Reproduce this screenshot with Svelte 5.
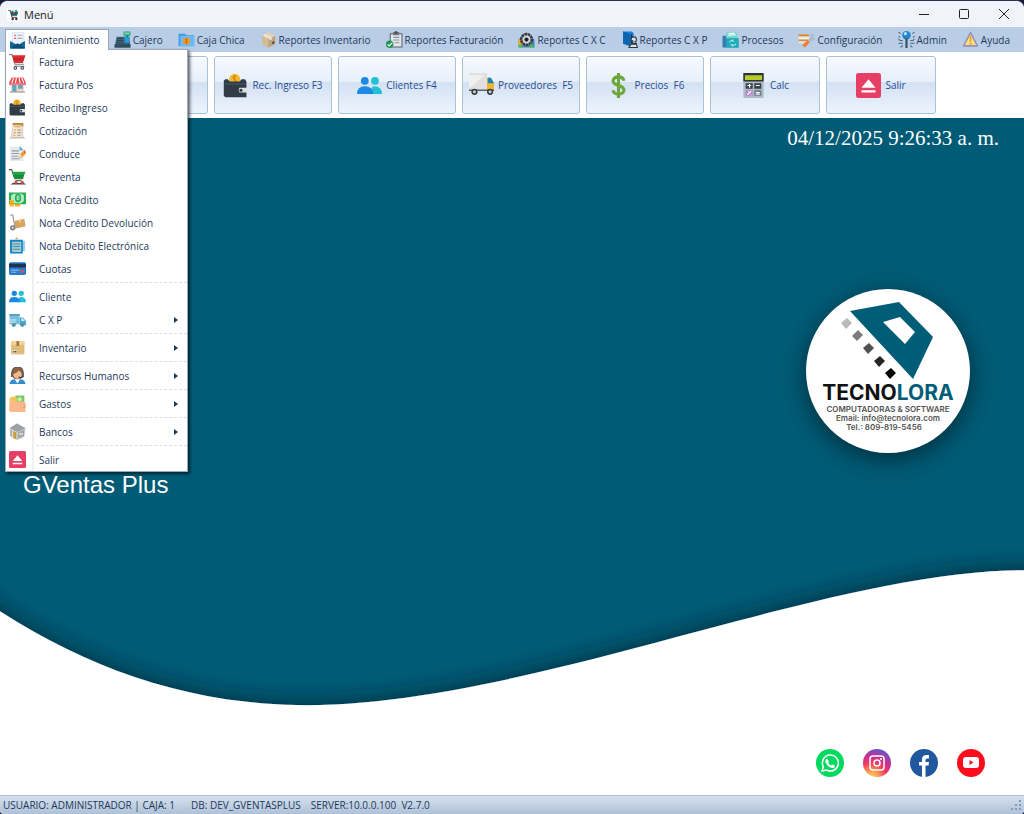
<script lang="ts">
  type MenuEntry = { label: string; icon: string; submenu?: boolean; divider?: boolean };

  const icons: Record<string, string> = {
    app: `<rect width="32" height="32" rx="4" fill="#fff"/><path d="M3 6h5l4 17h13" fill="none" stroke="#333" stroke-width="2"/><path d="M8 9h20l-4 10H11z" fill="#1e5660"/><path d="M11 6h5v5h-5zm9-1h5v6h-5z" fill="#28a08c"/><path d="M15 10h4v5h-4z" fill="#d84a42"/><circle cx="14" cy="27" r="3" fill="#333"/><circle cx="23" cy="27" r="3" fill="#333"/>`,
    mail: `<path d="M6 1h22v22H6z" fill="#eef1f6" stroke="#ccd3dd"/><path d="M10 6h3m3 0h9M10 12h3m3 0h9" stroke="#a4aec0" stroke-width="2"/><path d="M10 6h3m-3 6h3" stroke="#e25766" stroke-width="2"/><path d="M2 17l14 8 14-8v14H2z" fill="#06679b"/><path d="M2 31l14-10 14 10z" fill="#0a4d79"/>`,
    register: `<path d="M18 1h13v8H18z" fill="#26a77b"/><path d="M20 3h9v3h-9z" fill="#7bdcb6"/><path d="M23 9h4v4h-4z" fill="#2f4a5a"/><path d="M5 11h24l2 20H1z" fill="#426579"/><path d="M20 11h9v11h-9z" fill="#239cdc"/><path d="M6 14h12M5 18h13M4 22h14" stroke="#253e50" stroke-width="2" stroke-dasharray="3 1"/><path d="M1 25h30v6H1z" fill="#304b5c"/>`,
    cash: `<path d="M1 5h12l3 3h14v20H1z" fill="#4498e3"/><path d="M4 9h27v20H4z" fill="#69b9fa"/><circle cx="16" cy="19" r="7" fill="#f29b20"/><path d="M18 15h-3q-2 1 0 3l2 1q2 2-1 3h-3m3-9v12" stroke="#9b5c12" fill="none"/>`,
    cube: `<path d="M3 9L15 2l14 7-1 16-12 6L4 25z" fill="#c9b89a"/><path d="M3 9l13 6v16L4 25z" fill="#d0bd98"/><path d="M29 9l-13 6v16l12-6z" fill="#b9a47d"/><path d="M3 9L15 2l14 7-13 6z" fill="#ded2be"/><path d="M9 6l13 6v4l-4 2v-5L6 8z" fill="#f1e9d9"/><path d="M23 21l4-2v4l-4 2z" fill="#4c4032"/>`,
    check: `<path d="M8 5h22v25H8z" fill="#e1e7ec" stroke="#5d6470" stroke-width="2"/><path d="M13 2h12v6H13z" fill="#727984"/><circle cx="19" cy="3" r="3" fill="#4c535f"/><path d="M14 12h11m-11 5h11m-9 5h9" stroke="#8c929a" stroke-width="2"/><circle cx="7" cy="25" r="7" fill="#239657"/><path d="M3 25l3 3 6-6" fill="none" stroke="white" stroke-width="2"/>`,
    support: `<path d="M1 16L16 3l15 13v15H1z" fill="#4288ba"/><path d="M1 17l14-14 10 7-12 17H1z" fill="#f7b20e"/><circle cx="16" cy="16" r="10" fill="#d7dbe1" stroke="#353d49" stroke-width="5" stroke-dasharray="5 1"/><circle cx="16" cy="16" r="4" fill="#20242b"/><path d="M5 23l4 8H2zm18 0l8 8h-9z" fill="#56bd45"/>`,
    book: `<path d="M4 1h16l4 3v20H4z" fill="#1680d8"/><path d="M4 1l14 5v23L4 24z" fill="#0a65b3"/><path d="M20 6v20" stroke="#1c2937" stroke-width="2"/><circle cx="24" cy="16" r="5" fill="#dbe1e6" stroke="#303943" stroke-width="2"/><path d="M22 17v6h7v3M15 31l4-6h10l2 6z" fill="#dbe1e6" stroke="#2d3842" stroke-width="2"/>`,
    process: `<path d="M8 3l18-2 3 8v14H8z" fill="#78d6d0"/><path d="M12 5l12-1m-12 4l14-1" stroke="#fff" stroke-width="2"/><path d="M1 9h7v5h23v17H1z" fill="#347db1"/><path d="M8 14h23v17H8z" fill="#1eadb8"/><path d="M14 21q2-4 7-2l-2-3m7 8q-2 4-8 2l2 3" fill="none" stroke="#b6f0eb" stroke-width="2"/>`,
    config: `<path d="M1 6h20v18H1z" fill="#dcdde0"/><path d="M1 6h20v4H1zm0 10h19v3H1z" fill="#d88d35"/><path d="M1 12h20v3H1z" fill="#f7f2e2"/><path d="M12 24l12-12q-1-7 7-6l-4 4 1 4 4-2q0 6-7 6L15 29z" fill="#adb8cf"/><path d="M18 17l4 4-9 10-5-4z" fill="#f17d2e"/>`,
    admin: `<circle cx="16" cy="8" r="8" fill="#2385d4"/><circle cx="14" cy="5" r="3" fill="#b6e1fb"/><path d="M14 15h4v17h-4z" fill="#344d61"/><path d="M12 14h8M9 18H4l-3-3m8 8H1m8 4l-4 4M23 18h5l3-3m-8 8h8m-8 4l4 4M5 5L1 2m3 9H1m26-6l4-3m-3 9h3" fill="none" stroke="#49667e" stroke-width="2"/>`,
    warning: `<path d="M16 3l13 25H3z" fill="#ffd166" stroke="#9492be" stroke-width="3" stroke-linejoin="round"/><path d="M16 8l10 18H6z" fill="#ffe07a"/><path d="M16 10v10" stroke="#e99b25" stroke-width="3"/><circle cx="16" cy="24" r="2" fill="#e99b25"/>`,
    cart: `<path d="M0 3h6l5 18h17M10 25h19" fill="none" stroke="#7b838c" stroke-width="2"/><path d="M6 4h25l-5 15H10z" fill="#db2d32"/><path d="M8 9h21l-2 5H9z" fill="#ca2229"/><circle cx="12" cy="28" r="3.5" fill="#4d5661"/><circle cx="25" cy="28" r="3.5" fill="#4d5661"/><circle cx="12" cy="28" r="1.5" fill="#ddd"/><circle cx="25" cy="28" r="1.5" fill="#ddd"/>`,
    store: `<path d="M4 13h24v16H4z" fill="#ecd7ca"/><path d="M6 16h8v13H6zm11 0h9v8h-9z" fill="#62a7bf"/><path d="M5 3h22l5 10H0z" fill="#ed4b53"/><path d="M9 3L5 14m9-11l-2 11m7-11l2 11m3-11l4 11" stroke="#fff" stroke-width="2"/><path d="M0 13h32v3l-3 2-4-2-4 2-5-2-4 2-5-2-4 2-3-2z" fill="#e7777d"/><path d="M2 29h28v2H2z" fill="#8c847f"/>`,
    wallet: `<circle cx="15" cy="8" r="7" fill="#f5b52c"/><path d="M17 4h-3q-3 2 0 4l2 1q3 2 0 3h-3m2-9v10" stroke="#bd7811" fill="none"/><path d="M1 10l2-2h3l3 3h12l3-3h4l2 3v20H3l-2-2z" fill="#303c45"/><path d="M2 14h27" stroke="#42515b" stroke-width="2"/><path d="M21 19h10v6H21q-2-3 0-6z" fill="#dce1e2"/><circle cx="23" cy="22" r="2" fill="#303c45"/>`,
    quote: `<path d="M7 2l20 3v25H3z" fill="#e2d8cc"/><path d="M8 5h15v23H6z" fill="#f0e6d7"/><path d="M7 2h20v6h-3V6H7z" fill="#c38a3c"/><path d="M10 9h12M9 15h4m3 0h6M9 20h4m3 0h6M8 25h4m4 0h5" stroke="#d4a15f" stroke-width="2"/><path d="M16 15h6m-6 5h6m-6 5h6" stroke="#9f9a94"/><path d="M3 28h25l3 3H0z" fill="#c2c0bd"/>`,
    note: `<path d="M2 3h20l5 5v22H2z" fill="#e7eaed"/><path d="M20 2v8h7z" fill="#4aadd2"/><path d="M5 11h14M5 16h14M5 21h12M5 26h15" stroke="#939da6" stroke-width="2"/><path d="M18 25l3-8 7-6 4 5-8 8z" fill="#f19936"/><path d="M18 25l3-8 4 5z" fill="#efd8b4"/><path d="M27 11l2-2 3 5-2 2z" fill="#e45e4b"/>`,
    greencart: `<path d="M0 3h5l6 17h16" fill="none" stroke="#435a45" stroke-width="2"/><path d="M5 7h26l-5 13H10z" fill="#24a345"/><path d="M9 13h19l-2 6H11z" fill="#168b37"/><path d="M3 31h29l-4-3H7z" fill="#384650"/><path d="M12 23h12v2H12z" fill="#384650"/><circle cx="13" cy="27" r="3" fill="#e44b3b"/><circle cx="25" cy="27" r="3" fill="#e44b3b"/>`,
    credit: `<path d="M0 3h32v22H0z" fill="#27ae58"/><path d="M4 8l5-3h14l5 3v11l-5 4H9l-5-4z" fill="#b4efc2"/><ellipse cx="17" cy="13" rx="6" ry="8" fill="#25ad57"/><ellipse cx="17" cy="13" rx="2" ry="4" fill="none" stroke="#fff" stroke-width="1.5"/><path d="M1 17h8v12H1zm10 7h10v5H11z" fill="#f4b52f"/><path d="M1 20h8m-8 4h8m2 2h10" stroke="#d48715"/>`,
    dolly: `<path d="M2 2h5l4 22M9 27l21-5" fill="none" stroke="#8a8f90" stroke-width="2"/><path d="M10 13l19-4 2 14-19 4z" fill="#d9a562"/><path d="M18 11l4-1 1 5-4 1z" fill="#ebc991"/><circle cx="7" cy="26" r="5" fill="#7b8287"/><circle cx="7" cy="26" r="2" fill="#ddd"/>`,
    document: `<path d="M8 7h22v20H8z" fill="#8bcff0"/><path d="M2 5h24v26H2z" fill="#1685c8"/><path d="M6 9h17v19H6z" fill="#a9ced1"/><path d="M8 13h13M8 18h13M8 23h13" stroke="#478ea2" stroke-width="2"/><path d="M11 4l3-4 4 4z" fill="#d8a55f"/>`,
    card: `<rect y="4" width="32" height="24" rx="3" fill="#237bd0"/><path d="M0 7h32v7H0z" fill="#1e344e"/><path d="M4 19h15M4 23h10" stroke="#84bcec" stroke-width="2"/><circle cx="25" cy="21" r="3" fill="#e65250"/><circle cx="22" cy="21" r="3" fill="#996091"/>`,
    people: `<circle cx="10" cy="10" r="5" fill="#1e88e5"/><circle cx="23" cy="10" r="5" fill="#23bfd5"/><path d="M18 27q-1-10 4-10 10 0 10 10z" fill="#23bfd5"/><path d="M0 27q0-10 10-10t11 10z" fill="#1e88e5"/>`,
    bluetruck: `<path d="M1 6h19v19H1z" fill="#74bfdc"/><path d="M1 6h19v3H1z" fill="#4999b6"/><path d="M20 12h6l6 7v8H20z" fill="#4ba8cf"/><path d="M23 14h3l4 5h-7z" fill="#c2ebf6"/><path d="M0 17h13M2 21h10" stroke="#d5eff7" stroke-width="2"/><circle cx="9" cy="26" r="4" fill="#5397ad"/><circle cx="25" cy="26" r="4" fill="#5397ad"/>`,
    parcel: `<path d="M4 4h25v25H4z" fill="#dfbc79"/><path d="M4 4h25v7H4z" fill="#efd697"/><path d="M14 4h5v9h-5z" fill="#9f7643"/><path d="M7 21h8v6H7z" fill="#f2e9d2"/><path d="M8 24h2m1 0h3" stroke="#453a2d" stroke-width="3"/>`,
    agent: `<circle cx="16" cy="13" r="11" fill="#80522f"/><circle cx="16" cy="14" r="8" fill="#f0ba90"/><path d="M7 13q8-1 12-8 2 6 7 7-1-12-10-12T5 13z" fill="#91613a"/><path d="M5 14q0-14 12-14 10 0 10 14" fill="none" stroke="#4c555c" stroke-width="2"/><path d="M4 13h3v6H4zm21 0h3v6h-3z" fill="#4d585f"/><path d="M27 18q-4 3-9 1" fill="none" stroke="#333" stroke-width="2"/><path d="M1 32q1-9 10-9l5 5 5-5q9 0 10 9z" fill="#318fd2"/><path d="M11 23l5 8 5-8z" fill="#fff"/>`,
    expense: `<path d="M12 1h17v14H12z" fill="#7fc764"/><circle cx="20" cy="8" r="4" fill="#caefa8"/><circle cx="8" cy="10" r="7" fill="#efc757"/><path d="M1 12h27l3 3v17H3l-3-3z" fill="#fab98d"/><path d="M24 18h7v7h-7l-3-3z" fill="#eaa477"/><circle cx="25" cy="21" r="1.5" fill="#fff4dd"/>`,
    bank: `<path d="M1 10l14-9 16 9-2 16-13 6L3 26z" fill="#c4c6c6"/><path d="M1 10l14 7 16-7-16-9z" fill="#9da1a3"/><path d="M1 10l14 7v15L3 26z" fill="#dedfdd"/><path d="M8 15v13l6 3V18z" fill="#c89c3a"/><path d="M4 13v12m15-8v11m4-13v12m4-13v11" stroke="#868c90" stroke-width="2"/><path d="M19 19h8v3h-8z" fill="#dfe1e1"/>`,
    eject: `<rect width="32" height="32" rx="3" fill="#e63e65"/><path d="M16 8L7 19h18zM7 22h18v3H7z" fill="#fff"/>`,
    truck: `<path d="M0 1h23v22H0z" fill="#dfe0df"/><path d="M0 1h22L0 20z" fill="#f0f0ef"/><path d="M0 1h23v1H0z" fill="#c6c8c9"/><path d="M23 6h5l4 7v10h-9z" fill="#f5b334"/><path d="M24 6h4l4 7h-8z" fill="#1584bd"/><path d="M0 21h32v2H0z" fill="#596066"/><circle cx="7" cy="24" r="4" fill="#343c42"/><circle cx="27" cy="24" r="4" fill="#343c42"/><circle cx="7" cy="24" r="2" fill="#c9ced1"/><circle cx="27" cy="24" r="2" fill="#c9ced1"/>`,
    dollar: `<path d="M23 10q-1-5-7-5T9 10c0 8 14 4 14 12q-1 5-7 5t-7-5M16 0v32" fill="none" stroke="#6da63b" stroke-width="4"/>`,
    calculator: `<rect x="3" y="1" width="26" height="31" rx="2" fill="#aebbc2"/><path d="M3 0h26v11H3z" fill="#303339"/><path d="M5 3h22v6H5z" fill="#b7cb2c"/><path d="M6 13h9v7H6zm11 0h9v7h-9z" fill="#354149"/><path d="M6 22h9v7H6z" fill="#b581ce"/><path d="M17 22h9v7h-9z" fill="#6b7c88"/><path d="M8 16h5m-2-2v5m8-3h5M8 28l5-5m-4 1h1m3 4h-1m7-3h5m-5 2h5" stroke="#fff" stroke-width="1.5"/>`
  };

  const menus = [
    { label: 'Mantenimiento', icon: 'mail' },
    { label: 'Cajero', icon: 'register' },
    { label: 'Caja Chica', icon: 'cash' },
    { label: 'Reportes Inventario', icon: 'cube' },
    { label: 'Reportes Facturación', icon: 'check' },
    { label: 'Reportes C X C', icon: 'support' },
    { label: 'Reportes C X P', icon: 'book' },
    { label: 'Procesos', icon: 'process' },
    { label: 'Configuración', icon: 'config' },
    { label: 'Admin', icon: 'admin' },
    { label: 'Ayuda', icon: 'warning' }
  ];

  const entries: MenuEntry[] = [
    { label: 'Factura', icon: 'cart' },
    { label: 'Factura Pos', icon: 'store' },
    { label: 'Recibo Ingreso', icon: 'wallet' },
    { label: 'Cotización', icon: 'quote' },
    { label: 'Conduce', icon: 'note' },
    { label: 'Preventa', icon: 'greencart' },
    { label: 'Nota Crédito', icon: 'credit' },
    { label: 'Nota Crédito Devolución', icon: 'dolly' },
    { label: 'Nota Debito Electrónica', icon: 'document' },
    { label: 'Cuotas', icon: 'card' },
    { label: 'Cliente', icon: 'people', divider: true },
    { label: 'C X P', icon: 'bluetruck', submenu: true },
    { label: 'Inventario', icon: 'parcel', submenu: true, divider: true },
    { label: 'Recursos Humanos', icon: 'agent', submenu: true, divider: true },
    { label: 'Gastos', icon: 'expense', submenu: true, divider: true },
    { label: 'Bancos', icon: 'bank', submenu: true, divider: true },
    { label: 'Salir', icon: 'eject', divider: true }
  ];

  const tools = [
    { label: 'Rec. Ingreso F3', icon: 'wallet' },
    { label: 'Clientes F4', icon: 'people' },
    { label: 'Proveedores  F5', icon: 'truck' },
    { label: 'Precios  F6', icon: 'dollar' },
    { label: 'Calc', icon: 'calculator', narrow: true },
    { label: 'Salir', icon: 'eject', narrow: true }
  ];

  let openMenu = $state('Mantenimiento');

  function toggle(label: string) {
    openMenu = openMenu === label ? '' : label;
  }
</script>

{#snippet icon(name: string)}
  <svg class="icon" viewBox="0 0 32 32" aria-hidden="true">{@html icons[name]}</svg>
{/snippet}

<main class="window">
  <header class="titlebar">
    <span class="app-icon">{@render icon('app')}</span>
    <span class="caption">Menú</span>
    <button aria-label="Minimizar"><svg viewBox="0 0 10 10"><path d="M0 5.5h10" /></svg></button>
    <button aria-label="Maximizar"><svg viewBox="0 0 10 10"><rect x=".5" y=".5" width="9" height="9" rx="1" /></svg></button>
    <button aria-label="Cerrar"><svg viewBox="0 0 10 10"><path d="M0 0l10 10M10 0L0 10" /></svg></button>
  </header>

  <nav class="menubar">
    {#each menus as menu (menu.label)}
      <div class="menu">
        <button class="menu-button" class:open={openMenu === menu.label} onclick={() => toggle(menu.label)}>
          {@render icon(menu.icon)}
          <span>{menu.label}</span>
        </button>
        {#if menu.label === 'Mantenimiento' && openMenu === menu.label}
          <ul class="dropdown">
            {#each entries as entry (entry.label)}
              <li class:divider={entry.divider}>
                <button>
                  <span class="slot">{@render icon(entry.icon)}</span>
                  <span class="entry-label">{entry.label}</span>
                  {#if entry.submenu}<i class="arrow"></i>{/if}
                </button>
              </li>
            {/each}
          </ul>
        {/if}
      </div>
    {/each}
  </nav>

  <div class="toolbar">
    <button class="tool compact" aria-label="Factura">{@render icon('cart')}</button>
    <button class="tool" aria-label="Factura Pos">{@render icon('store')}</button>
    {#each tools as tool (tool.label)}
      <button class="tool" class:narrow={tool.narrow}>
        {@render icon(tool.icon)}
        <span>{tool.label}</span>
      </button>
    {/each}
  </div>

  <section class="stage">
    <svg class="wave" viewBox="0 0 1024 678" preserveAspectRatio="none" aria-hidden="true">
      <defs>
        <filter id="wave-shadow" x="-10%" y="-40%" width="120%" height="160%">
          <feDropShadow dx="0" dy="-5" stdDeviation="10" flood-color="#00202e" flood-opacity="0.6" />
        </filter>
      </defs>
      <path
        d="M-60 440L0 494C90 552 190 588 307 588C530 588 825 453 1024 453L1090 456V740H-60z"
        fill="#fff"
        filter="url(#wave-shadow)"
      />
    </svg>

    <time class="clock">04/12/2025 9:26:33 a. m.</time>

    <div class="logo">
      <svg class="mark" viewBox="0 0 96 80" aria-hidden="true">
        <path fill="#005d78" fill-rule="evenodd" d="M10 10L59 1l34 35-20 42zM43 21l22 22 10-12-15-15z" />
        <path fill="#b9b9b9" d="M1 22l6-5 5 5-6 6z" />
        <path fill="#7c7c7c" d="M12 35l6-6 5 5-6 6z" />
        <path fill="#505050" d="M23 47l6-5 5 5-6 6z" />
        <path fill="#262626" d="M34 60l6-5 5 5-6 6z" />
        <path fill="#000" d="M45 72l6-5 5 5-6 6z" />
      </svg>
      <strong>TECNO<b>LORA</b></strong>
      <span>COMPUTADORAS &amp; SOFTWARE</span>
      <span>Email: info@tecnolora.com</span>
      <span class="phone">Tel.: 809-819-5456</span>
    </div>

    <h1>GVentas Plus</h1>

    <div class="social">
      <a href="#whatsapp" aria-label="WhatsApp">
        <svg viewBox="0 0 28 28">
          <circle cx="14" cy="14" r="14" fill="#00d95f" />
          <path d="M6 22l1.3-4.3A8 8 0 1 1 10.5 21z" fill="none" stroke="#fff" stroke-width="1.5" />
          <path d="M11 9.5l2 3-1 1q1 2 3 3l1-1 3 1q0 3-3 2.5-5-1-6.500-6-.5-3 1.5-3.5z" fill="#fff" />
        </svg>
      </a>
      <a href="#instagram" aria-label="Instagram">
        <svg viewBox="0 0 28 28">
          <defs>
            <radialGradient id="insta" cx="30%" cy="105%" r="110%">
              <stop offset="0" stop-color="#ffdb73" />
              <stop offset=".25" stop-color="#fd9a4d" />
              <stop offset=".5" stop-color="#f13b62" />
              <stop offset=".72" stop-color="#c72f90" />
              <stop offset="1" stop-color="#5b59cf" />
            </radialGradient>
          </defs>
          <circle cx="14" cy="14" r="14" fill="url(#insta)" />
          <rect x="7" y="7" width="14" height="14" rx="3" fill="none" stroke="#fff" stroke-width="1.5" />
          <circle cx="14" cy="14" r="3" fill="none" stroke="#fff" stroke-width="1.5" />
          <circle cx="18" cy="10" r="1" fill="#fff" />
        </svg>
      </a>
      <a href="#facebook" aria-label="Facebook">
        <svg viewBox="0 0 28 28">
          <circle cx="14" cy="14" r="14" fill="#21589d" />
          <path d="M12 28V16.500H9V13h3v-2.500Q12 6 16.500 6H19v3.500h-2q-1.500 0-1.500 1.500v2H19l-.5 3.500h-3V28z" fill="#fff" />
        </svg>
      </a>
      <a href="#youtube" aria-label="YouTube">
        <svg viewBox="0 0 28 28">
          <circle cx="14" cy="14" r="14" fill="#fc0d1b" />
          <rect x="6" y="8" width="16" height="11" rx="3" fill="#fff" />
          <path d="M12.500 11v5l4-2.500z" fill="#fc0d1b" />
        </svg>
      </a>
    </div>
  </section>

  <footer class="statusbar">
    <span class="user">USUARIO: ADMINISTRADOR | CAJA: 1</span>
    <span class="db">DB: DEV_GVENTASPLUS</span>
    <span>SERVER:10.0.0.100&nbsp; V2.7.0</span>
    <svg class="grip" viewBox="0 0 10 10" aria-hidden="true">
      <path d="M8 0h2v2H8zM4 4h2v2H4zm4 0h2v2H8zM0 8h2v2H0zm4 0h2v2H4zm4 0h2v2H8z" fill="#8199bd" />
    </svg>
  </footer>
</main>

<style>
  :global(body) {
    margin: 0;
    background-color: #171c3c;
  }

  .window {
    display: flex;
    flex-direction: column;
    box-sizing: border-box;
    min-height: 100vh;
    border-top: 1px solid #2a3054;
    border-radius: 8px 8px 4px 4px;
    overflow: hidden;
    background-color: #fff;
    font-family: 'Open Sans', 'Noto Sans', sans-serif;
    font-size: 10px;
    color: #1e395b;
  }

  button {
    margin: 0;
    padding: 0;
    border: 0;
    background: none;
    font: inherit;
    color: inherit;
    white-space: nowrap;
  }

  .icon {
    display: block;
    flex: none;
    width: 17px;
    height: 17px;
  }

  .titlebar {
    display: flex;
    align-items: center;
    height: 26px;
    padding-left: 7px;
    background-color: #f0f3fa;
    color: #1a1a1a;
  }

  .app-icon .icon {
    width: 13px;
    height: 13px;
  }

  .caption {
    flex: 1;
    margin-left: 4px;
    font-size: 11px;
  }

  .titlebar button {
    display: grid;
    place-items: center;
    width: 40px;
    height: 26px;
  }

  .titlebar button svg {
    width: 10px;
    height: 10px;
    fill: none;
    stroke: #222;
    overflow: visible;
  }

  .menubar {
    display: flex;
    height: 25px;
    padding-left: 5px;
    background-color: #bacde6;
  }

  .menu {
    position: relative;
    padding-top: 2px;
  }

  .menu-button {
    display: flex;
    align-items: center;
    gap: 2px;
    height: 21px;
    padding: 0 10px 0 5px;
  }

  .menu-button.open {
    position: relative;
    z-index: 3;
    padding: 0 8px 0 3px;
    border: 1px solid #9ba7b7;
    border-bottom: 0;
    background-color: #fff;
  }

  .dropdown {
    position: absolute;
    top: 22px;
    left: 0;
    z-index: 2;
    width: 181px;
    margin: 0;
    padding: 0;
    border: 1px solid #9ba7b7;
    background: linear-gradient(90deg, #fff 26px, #f0f0f0 26px, #f0f0f0 28px, #fff 28px);
    box-shadow: 2px 2px 3px rgba(0, 0, 0, 0.6);
    list-style: none;
  }

  .dropdown button {
    display: flex;
    align-items: center;
    width: 100%;
    height: 23px;
    text-align: left;
  }

  .divider::before {
    content: '';
    display: block;
    margin: 2px 0 2px 30px;
    border-top: 1px dashed #dedede;
  }

  .slot {
    padding-left: 3px;
  }

  .entry-label {
    flex: 1;
    margin-left: 13px;
  }

  .arrow {
    margin-right: 9px;
    border: 3px solid transparent;
    border-right: 0;
    border-left: 4px solid #1e395b;
  }

  .toolbar {
    display: flex;
    gap: 6px;
    padding: 4px 5px;
    overflow: hidden;
  }

  .tool {
    display: flex;
    flex: none;
    justify-content: center;
    align-items: center;
    gap: 4px;
    box-sizing: border-box;
    width: 118px;
    height: 58px;
    border: 1px solid #abc1d5;
    border-radius: 3px;
    background: linear-gradient(#f7faff, #e7effa 44%, #d3e1f3 45%, #ecf3fd);
    color: #2b4c94;
    white-space: pre;
  }

  .tool .icon {
    width: 25px;
    height: 25px;
  }

  .compact {
    width: 79px;
  }

  .narrow {
    width: 110px;
  }

  .stage {
    position: relative;
    display: flex;
    flex: 1;
    flex-direction: column;
    background-color: #005c76;
    color: #fff;
  }

  .wave {
    position: absolute;
    inset: 0;
    width: 100%;
    height: 100%;
  }

  .clock,
  .logo,
  h1,
  .social {
    position: relative;
  }

  .clock {
    align-self: flex-end;
    margin: 8px 25px 0 0;
    font-family: 'Liberation Serif', serif;
    font-size: 21px;
    line-height: 24px;
  }

  .logo {
    display: flex;
    flex-direction: column;
    align-items: center;
    align-self: flex-end;
    box-sizing: border-box;
    width: 164px;
    height: 164px;
    margin: 139px 54px 0 0;
    padding-top: 12px;
    border-radius: 50%;
    background-color: #fff;
    box-shadow: 0 6px 24px rgba(0, 25, 36, 0.7);
    color: #555;
    font-family: Inter, sans-serif;
    font-size: 8px;
    font-weight: 600;
    line-height: 9px;
    white-space: nowrap;
  }

  .mark {
    flex: none;
    width: 96px;
    height: 80px;
  }

  .logo strong {
    color: #111;
    font-size: 21px;
    font-weight: 700;
    line-height: 24px;
  }

  .logo b {
    color: #005d78;
    font-weight: 700;
  }

  .phone {
    margin-right: 8px;
  }

  h1 {
    margin: 16px 0 0 23px;
    font-family: 'Liberation Sans', sans-serif;
    font-size: 24px;
    font-weight: 400;
    line-height: 32px;
  }

  .social {
    display: flex;
    justify-content: flex-end;
    gap: 19px;
    margin: auto 39px 18px 0;
  }

  .social svg {
    display: block;
    width: 28px;
    height: 28px;
  }

  .statusbar {
    display: flex;
    align-items: center;
    height: 18px;
    padding: 0 3px;
    border-top: 1px solid #b1c0d4;
    background: linear-gradient(#d5e1ef, #afc1d7);
  }

  .user {
    margin-right: 16px;
  }

  .db {
    margin-right: 10px;
  }

  .grip {
    width: 10px;
    height: 10px;
    margin-left: auto;
  }
</style>
